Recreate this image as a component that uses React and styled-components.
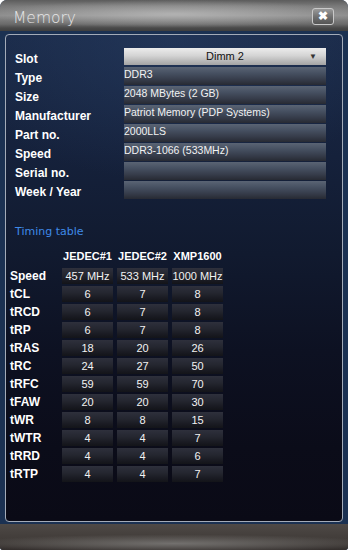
import { Fragment } from 'react'
import styled, { createGlobalStyle } from 'styled-components'

const Global = createGlobalStyle`
  html, body { margin: 0; padding: 0; background: #ffffff; }
  body { width: 348px; height: 550px; overflow: hidden; }
`;

const Window = styled.div`
  width: 348px;
  height: 550px;
  display: flex;
  flex-direction: column;
  border-radius: 7px 7px 3px 3px;
  overflow: hidden;
  background: #1b3152;
  font-family: "Liberation Sans", Arial, sans-serif;
`;

const TitleBar = styled.div`
  height: 31px;
  flex: none;
  display: flex;
  align-items: center;
  justify-content: space-between;
  padding: 0 14px 0 13px;
  box-sizing: border-box;
  background:
    radial-gradient(ellipse 55% 45% at 50% 45%, rgba(210,210,210,0.55), rgba(210,210,210,0) 100%),
    linear-gradient(#5c5c5c 0%, #7a7a7a 20%, #8c8c8c 50%, #6a6a6a 78%, #4a4a4a 90%, #3e3e3e 100%);
`;

const Title = styled.span`
  font-family: "DejaVu Sans", sans-serif;
  font-weight: 200;
  font-size: 15.5px;
  color: #e6e6e6;
  margin-top: 4px;
`;

const CloseButton = styled.div`
  width: 22px;
  height: 17px;
  box-sizing: border-box;
  margin-top: 1px;
  border: 1px solid #c9c9c9;
  border-radius: 3px;
  background: linear-gradient(#9a9a9a, #6e6e6e 55%, #555555);
  display: flex;
  align-items: center;
  justify-content: center;
  color: #ffffff;
  font-weight: bold;
  font-size: 12px;
  line-height: 1;
`;

const Body = styled.div`
  flex: 1;
  padding: 3px 5px 2px 5px;
  display: flex;
`;

const Panel = styled.div`
  flex: 1;
  border: 1px solid #a3abb8;
  border-radius: 4px;
  padding: 13px 0 0 9px;
  background:
    radial-gradient(ellipse 70% 30% at 50% 0%, rgba(40,62,100,0.55), rgba(40,62,100,0) 100%),
    linear-gradient(#1a2a48 0%, #15213b 25%, #111a2f 45%, #0d1122 65%, #0b0c19 85%, #0a0a16 100%);
`;

const InfoGrid = styled.div`
  display: grid;
  grid-template-columns: 109px 202px;
  grid-auto-rows: 18px;
  row-gap: 1px;
`;

const Label = styled.div`
  color: #ffffff;
  font-weight: bold;
  font-size: 12px;
  line-height: 18px;
  padding-top: 2px;
`;

const ValueBox = styled.div`
  color: #f2f2f2;
  font-size: 10.5px;
  line-height: 14px;
  white-space: nowrap;
  background: linear-gradient(#5a6474 0%, #465061 35%, #363c4a 70%, #272a33 100%);
`;

const Dropdown = styled.div`
  position: relative;
  height: 17px;
  color: #111111;
  font-size: 11px;
  line-height: 17px;
  text-align: center;
  background: linear-gradient(#ececec 0%, #d4d4d4 45%, #b5b5b5 80%, #a4a4a4 100%);
`;

const Arrow = styled.span`
  position: absolute;
  right: 9px;
  top: 0;
  font-size: 8px;
  color: #333333;
`;

const SectionTitle = styled.div`
  margin-top: 26px;
  color: #3f8ae8;
  font-family: "DejaVu Sans", sans-serif;
  font-size: 11px;
`;

const Table = styled.div`
  margin-top: 12px;
  margin-left: -5px;
  display: grid;
  grid-template-columns: 48px 51px 51px 51px;
  column-gap: 4px;
  row-gap: 2px;
  grid-auto-rows: 16px;
`;

const Head = styled.div`
  color: #ffffff;
  font-weight: bold;
  font-size: 11px;
  text-align: center;
  line-height: 12px;
  white-space: nowrap;
  margin-bottom: 3px;
`;

const RowLabel = styled.div`
  color: #ffffff;
  font-weight: bold;
  font-size: 12px;
  line-height: 16px;
`;

const Cell = styled.div`
  color: #f2f2f2;
  font-size: 11px;
  line-height: 16px;
  text-align: center;
  white-space: nowrap;
  background: linear-gradient(#2e303c 0%, #24262f 45%, #1a1b23 75%, #131419 100%);
`;

const BottomBar = styled.div`
  height: 26px;
  flex: none;
  background:
    radial-gradient(ellipse 60% 35% at 50% 75%, rgba(120,118,116,0.9), rgba(120,118,116,0) 100%),
    linear-gradient(#4e4946 0%, #45403d 40%, #3e3936 75%, #332e2c 100%);
`;

const info = [
  ['Type', 'DDR3'],
  ['Size', '2048 MBytes (2 GB)'],
  ['Manufacturer', 'Patriot Memory (PDP Systems)'],
  ['Part no.', '2000LLS'],
  ['Speed', 'DDR3-1066 (533MHz)'],
  ['Serial no.', ''],
  ['Week / Year', ''],
];

const timings = [
  ['Speed', '457 MHz', '533 MHz', '1000 MHz'],
  ['tCL', '6', '7', '8'],
  ['tRCD', '6', '7', '8'],
  ['tRP', '6', '7', '8'],
  ['tRAS', '18', '20', '26'],
  ['tRC', '24', '27', '50'],
  ['tRFC', '59', '59', '70'],
  ['tFAW', '20', '20', '30'],
  ['tWR', '8', '8', '15'],
  ['tWTR', '4', '4', '7'],
  ['tRRD', '4', '4', '6'],
  ['tRTP', '4', '4', '7'],
];

export default function App() {
  return (
    <>
      <Global />
      <Window>
        <TitleBar>
          <Title>Memory</Title>
          <CloseButton>✖</CloseButton>
        </TitleBar>
        <Body>
          <Panel>
            <InfoGrid>
              <Label>Slot</Label>
              <Dropdown>
                Dimm 2
                <Arrow>▼</Arrow>
              </Dropdown>
              {info.map(([k, v]) => (
                <Fragment key={k}>
                  <Label>{k}</Label>
                  <ValueBox>{v}</ValueBox>
                </Fragment>
              ))}
            </InfoGrid>
            <SectionTitle>Timing table</SectionTitle>
            <Table>
              <Head />
              <Head>JEDEC#1</Head>
              <Head>JEDEC#2</Head>
              <Head>XMP1600</Head>
              {timings.map(([k, a, b, c]) => (
                <Fragment key={k}>
                  <RowLabel>{k}</RowLabel>
                  <Cell>{a}</Cell>
                  <Cell>{b}</Cell>
                  <Cell>{c}</Cell>
                </Fragment>
              ))}
            </Table>
          </Panel>
        </Body>
        <BottomBar />
      </Window>
    </>
  )
}
